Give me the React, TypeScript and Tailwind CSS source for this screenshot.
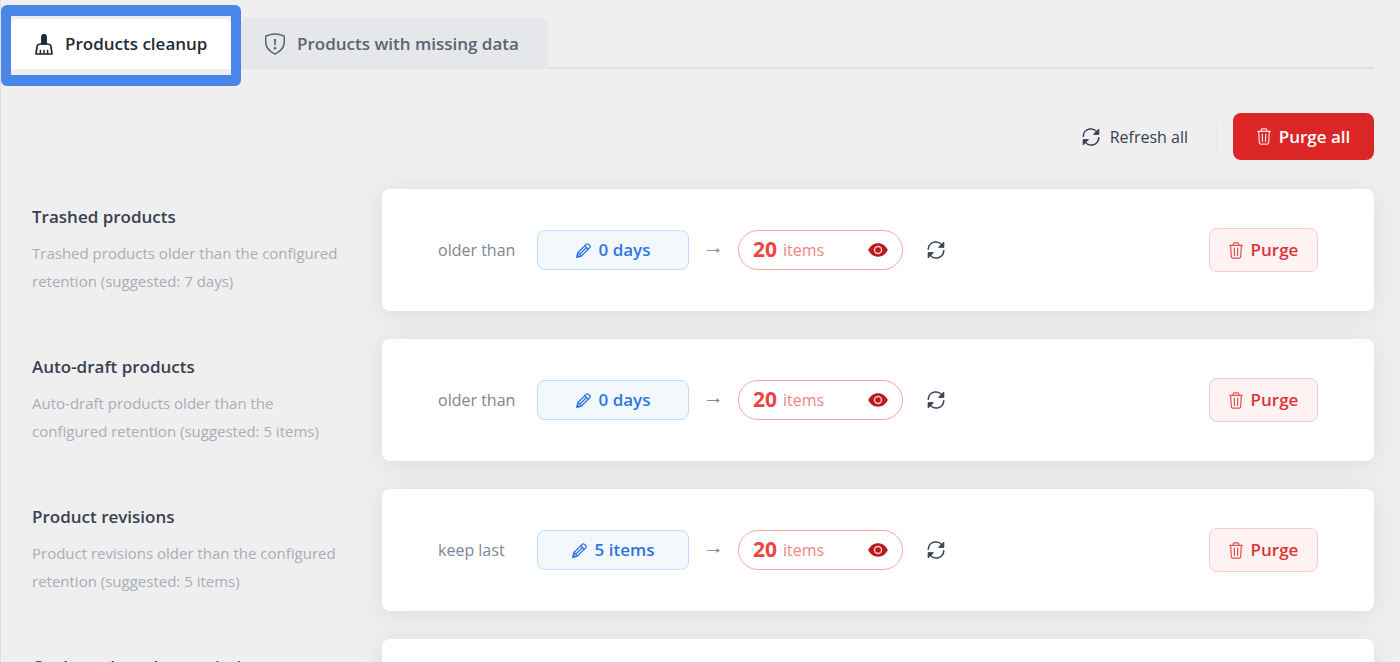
import { useState } from 'react'

type IconProps = { className?: string }

const rows = [
  {
    id: 'trashed',
    title: 'Trashed products',
    description: 'Trashed products older than the configured retention (suggested: 7 days)',
    rule: 'older than',
    value: '0 days',
  },
  {
    id: 'auto-draft',
    title: 'Auto-draft products',
    description: 'Auto-draft products older than the configured retention (suggested: 5 items)',
    rule: 'older than',
    value: '0 days',
  },
  {
    id: 'revisions',
    title: 'Product revisions',
    description: 'Product revisions older than the configured retention (suggested: 5 items)',
    rule: 'keep last',
    value: '5 items',
  },
]

function BroomIcon({ className }: IconProps) {
  return (
    <svg className={className} viewBox="0 0 18 21" fill="none" stroke="currentColor" strokeWidth="1.7" strokeLinejoin="round">
      <path d="M6.900 10V2.800a2.100 2.100 0 0 1 4.200 0V10z" fill="currentColor" />
      <path d="M1.800 15v-1.200c0-2.200 1.400-3.600 3.600-3.800h7.200c2.200.2 3.600 1.600 3.600 3.800V15" />
      <path d="M1.800 14.400 1 20h16l-.8-5.600" />
      <path d="M5.400 15.800v4.200M9 15.800v4.200M12.600 15.800v4.200" strokeWidth="1.500" />
    </svg>
  )
}

function ShieldIcon({ className }: IconProps) {
  return (
    <svg className={className} viewBox="0 0 20 22" fill="none" stroke="currentColor" strokeWidth="1.500" strokeLinejoin="round">
      <path d="M10 .9C7 .9 4 1.600 1.600 2.800.9 3.100.7 3.600.7 4.200v4.600c0 5.200 3.800 9.600 9.300 12.300 5.500-2.700 9.300-7.100 9.300-12.300V4.200c0-.6-.2-1.100-.9-1.400C16 1.600 13 .9 10 .9z" />
      <path d="M8.900 6h2.200l-.5 6.400H9.400z" fill="currentColor" stroke="none" />
      <circle cx="10" cy="15.300" r="1.300" fill="currentColor" stroke="none" />
    </svg>
  )
}

function RefreshIcon({ className }: IconProps) {
  return (
    <svg className={className} viewBox="0 0 18 18" fill="none" stroke="currentColor" strokeWidth="1.600" strokeLinecap="round" strokeLinejoin="round">
      <path d="M1.200 8.200A7.600 7.600 0 0 1 15.800 5.600" />
      <path d="M16.800 1.400v4.900h-4.900z" fill="currentColor" strokeWidth="1" />
      <path d="M16.800 9.800A7.600 7.600 0 0 1 2.200 12.400" />
      <path d="M1.200 16.600v-4.900h4.900z" fill="currentColor" strokeWidth="1" />
    </svg>
  )
}

function TrashIcon({ className }: IconProps) {
  return (
    <svg className={className} viewBox="0 0 14 17" fill="none" stroke="currentColor" strokeWidth="1.200" strokeLinecap="round" strokeLinejoin="round">
      <path d="M.7 3.400h12.600M4.200 3.200V2c0-.7.5-1.200 1.200-1.200h3.200c.7 0 1.200.5 1.200 1.200v1.200" />
      <path d="M1.600 3.600l.8 11.400c.1.700.6 1.200 1.300 1.200h6.600c.7 0 1.200-.5 1.300-1.200l.8-11.400" />
      <path d="M5.300 6l.2 7.600M8.700 6l-.2 7.600" />
    </svg>
  )
}

function PencilIcon({ className }: IconProps) {
  return (
    <svg className={className} viewBox="0 0 16 16" fill="none" stroke="currentColor" strokeWidth="1.400" strokeLinecap="round" strokeLinejoin="round">
      <path d="M.9 15.100l1.200-4.900L10.800 1.500c.7-.7 1.800-.7 2.500 0l1.200 1.200c.7.7.7 1.800 0 2.500L5.800 13.900z" />
      <path d="M9.400 2.900l3.700 3.700M2.100 10.200l3.700 3.700M4 12L11.200 4.800" />
      <path d="M.9 15.100l.6-2.500 1.900 1.900z" fill="currentColor" />
    </svg>
  )
}

function EyeIcon({ className }: IconProps) {
  return (
    <svg className={className} viewBox="0 0 20 14" fill="none">
      <path d="M10 .3c4.300 0 7.800 2.500 9.800 6.700-2 4.200-5.500 6.700-9.800 6.700S2.200 11.200.2 7C2.200 2.800 5.700.3 10 .3z" fill="currentColor" />
      <circle cx="10" cy="7" r="3.500" stroke="#fecaca" strokeWidth="1.400" />
    </svg>
  )
}

function ArrowIcon({ className }: IconProps) {
  return (
    <svg className={className} viewBox="0 0 13 8" fill="none" stroke="currentColor" strokeWidth="1">
      <path d="M0 4.500h11" />
      <path d="M9.500 2 13 4.500 9.500 7z" fill="currentColor" stroke="none" />
    </svg>
  )
}

export default function App() {
  const [tab, setTab] = useState('cleanup')

  return (
    <main className="h-screen overflow-hidden border-l border-[#dedfe2] bg-[#efefef] pr-[26px] font-['Open_Sans','Noto_Sans',sans-serif] text-[#374151]">
      <nav role="tablist" className="flex items-end">
        <div className="mt-[5px] -mb-[17px] rounded-md bg-[#4a86e8] px-[10px] py-[11px]">
          <div className="bg-[#efefef] pt-[3px] pb-[6px]">
            <button
              role="tab"
              aria-selected={tab === 'cleanup'}
              onClick={() => setTab('cleanup')}
              className="flex h-[50px] w-[220px] items-center gap-3 rounded-t-md bg-white pl-6 text-[17px] font-semibold whitespace-nowrap text-[#1f2937]"
            >
              <BroomIcon className="h-[21px] w-[18px] shrink-0" />
              Products cleanup
            </button>
          </div>
        </div>
        <button
          role="tab"
          aria-selected={tab === 'missing'}
          onClick={() => setTab('missing')}
          className="flex h-[51px] w-[307px] items-center gap-3 rounded-t-lg bg-[#e5e7eb] pl-6 text-[17px] font-semibold whitespace-nowrap text-[#5b6472]"
        >
          <ShieldIcon className="h-[22px] w-5 shrink-0" />
          Products with missing data
        </button>
        <div className="flex-1 border-b-2 border-[#e0e1e4]" />
      </nav>

      <div className="mt-11 flex h-[47px] items-center justify-end">
        <button className="flex items-center gap-[10px] text-[16px] text-[#374151]">
          <RefreshIcon className="size-[18px]" />
          Refresh all
        </button>
        <div className="mr-4 ml-7 h-7 w-px bg-[#e5e7eb]" />
        <button className="flex h-full w-[141px] items-center justify-center gap-2 rounded-lg bg-[#dc2626] text-[17px] font-semibold text-white">
          <TrashIcon className="h-[17px] w-[14px] opacity-85" />
          Purge all
        </button>
      </div>

      <div className="mt-[29px] flex flex-col gap-7">
        {rows.map((row) => (
          <section key={row.id} className="flex">
            <div className="w-[381px] shrink-0 pt-[14px] pr-9 pl-[31px]">
              <h2 className="text-[17px] leading-7 font-semibold whitespace-nowrap">{row.title}</h2>
              <p className="mt-2 text-[15px] leading-7 text-[#a8adb8]">{row.description}</p>
            </div>
            <div className="flex h-[122px] flex-1 items-center rounded-lg bg-white px-14 shadow-[0_4px_24px_rgba(31,41,55,0.09)]">
              <span className="w-[99px] text-[16px] text-[#808691]">{row.rule}</span>
              <button className="flex h-10 w-[152px] items-center justify-center gap-2 rounded-lg border border-[#bfdbfe] bg-[#f3f8fd] text-[17px] font-semibold text-[#2f76e0]">
                <PencilIcon className="size-[15px]" />
                {row.value}
              </button>
              <ArrowIcon className="mx-[18px] h-2 w-[13px] text-[#8a8f99]" />
              <button className="flex h-10 w-[165px] items-center rounded-full border border-[#fca5a5] px-[14px] text-[#f58585]">
                <span className="text-[21px] font-bold text-[#ef4444]">20</span>
                <span className="ml-[6px] text-[16px]">items</span>
                <EyeIcon className="ml-auto h-[14px] w-5 text-[#b91c1c]" />
              </button>
              <button aria-label="Refresh" className="ml-6 text-[#374151]">
                <RefreshIcon className="size-[18px]" />
              </button>
              <button className="ml-auto flex h-11 w-[109px] items-center justify-center gap-2 rounded-lg border border-[#fecaca] bg-[#fef2f2] text-[17px] font-semibold text-[#dc3535]">
                <TrashIcon className="h-[17px] w-[14px] opacity-85" />
                Purge
              </button>
            </div>
          </section>
        ))}
        <section className="flex">
          <div className="w-[381px] shrink-0 pt-[14px] pl-[31px]">
            <h2 className="text-[17px] leading-7 font-semibold whitespace-nowrap">Orphaned product variations</h2>
          </div>
          <div className="h-[122px] flex-1 rounded-lg bg-white shadow-[0_4px_24px_rgba(31,41,55,0.09)]" />
        </section>
      </div>
    </main>
  )
}
